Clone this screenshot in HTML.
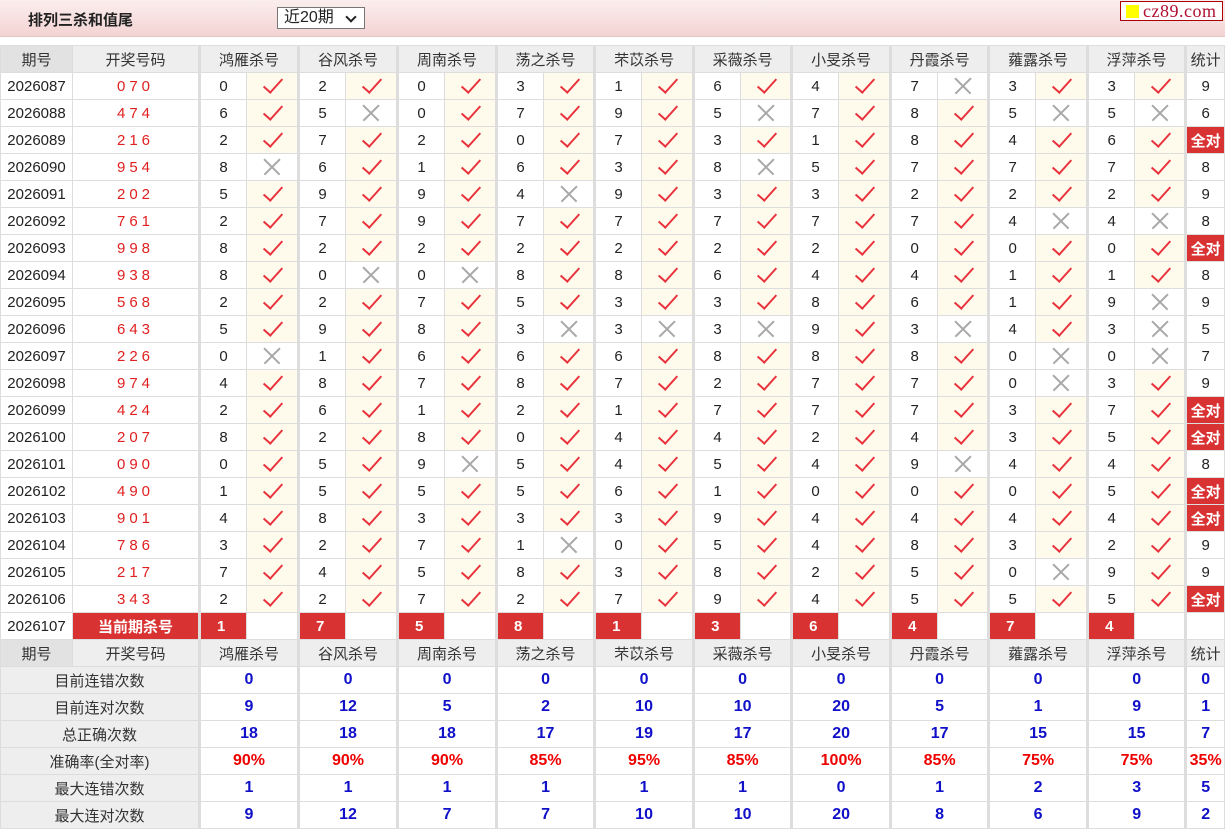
<!DOCTYPE html>
<html><head><meta charset="utf-8"><style>
*{margin:0;padding:0;box-sizing:border-box}
body{width:1225px;height:827px;overflow:hidden;background:#fff;font-family:"Liberation Sans","Noto Sans CJK SC",sans-serif;font-size:15px;color:#222}
.top{position:absolute;left:0;top:0;width:1225px;height:37px;background:linear-gradient(#fbeeee,#f4d3d3);border-bottom:1px solid #e6c4c4}
.title{position:absolute;left:28px;top:9px;font-size:15px;font-weight:bold;color:#222}
.sel{position:absolute;left:277px;top:7px;width:88px;height:22px;border:1px solid #777;background:#fff;font-size:16px;padding-left:6px;line-height:20px}
.sel:after{content:"";position:absolute;right:9px;top:5px;width:6px;height:6px;border-right:2px solid #222;border-bottom:2px solid #222;transform:rotate(45deg)}
.logo{position:absolute;left:1120px;top:1px;width:103px;height:20px;border:1px solid #a00;background:#fff;font-family:"Liberation Serif",serif;font-size:18px;color:#b01030;line-height:18px;padding-left:22px;letter-spacing:.5px}
.logo:before{content:"";position:absolute;left:5px;top:3px;width:13px;height:13px;background:#ff0}
table{position:absolute;left:0;top:45px;width:1225px;border-collapse:collapse;table-layout:fixed}
td{height:27px;border:1px solid #ddd;text-align:center;white-space:nowrap;overflow:hidden;position:relative;padding:0}
td.g{border-left:3px solid #ddd}
tr.h td{background:#eee;color:#333}
tr.h td.p{background:#e2e2e2}
td.k{color:#e02020;letter-spacing:4px}
td.y{background:#fffbec}
td.r{background:#d83232;color:#fff;font-weight:bold}
td.rn{background:#d83232;color:#fff;font-weight:bold;text-align:left;padding-left:16px}
td.l{background:#eee;color:#333}
td.v{color:#1010c8;font-weight:bold;font-size:16px}
td.vr{color:#e00;font-weight:bold;font-size:16px}
td.s{font-size:15px}
.c,.x{position:absolute;left:50%;top:50%}
.c:after{content:"";position:absolute;left:-4px;top:-12px;width:8px;height:17px;border-right:2px solid #e8323c;border-bottom:2px solid #e8323c;transform:rotate(42deg)}
.x:before,.x:after{content:"";position:absolute;left:-11px;top:-1px;width:22px;height:1.5px;background:#a8a8a8;transform:rotate(45deg)}
.x:after{transform:rotate(-45deg)}
</style></head><body>
<div class="top"><div class="title">排列三杀和值尾</div><div class="sel">近20期</div><div class="logo">cz89.com</div></div>
<table>
<colgroup><col style="width:72px"><col style="width:127px">
<col style="width:47px"><col style="width:52px"><col style="width:47px"><col style="width:52px"><col style="width:47px"><col style="width:52px"><col style="width:47px"><col style="width:51px"><col style="width:47px"><col style="width:52px"><col style="width:47px"><col style="width:51px"><col style="width:47px"><col style="width:52px"><col style="width:47px"><col style="width:51px"><col style="width:47px"><col style="width:52px"><col style="width:47px"><col style="width:51px"><col style="width:39px"></colgroup>
<tr class="h"><td class="p">期号</td><td>开奖号码</td><td class="g" colspan="2">鸿雁杀号</td><td class="g" colspan="2">谷风杀号</td><td class="g" colspan="2">周南杀号</td><td class="g" colspan="2">荡之杀号</td><td class="g" colspan="2">芣苡杀号</td><td class="g" colspan="2">采薇杀号</td><td class="g" colspan="2">小旻杀号</td><td class="g" colspan="2">丹霞杀号</td><td class="g" colspan="2">蕹露杀号</td><td class="g" colspan="2">浮萍杀号</td><td class="g">统计</td></tr>
<tr><td>2026087</td><td class="k">070</td><td class="g">0</td><td class="y"><b class="c"></b></td><td class="g">2</td><td class="y"><b class="c"></b></td><td class="g">0</td><td class="y"><b class="c"></b></td><td class="g">3</td><td class="y"><b class="c"></b></td><td class="g">1</td><td class="y"><b class="c"></b></td><td class="g">6</td><td class="y"><b class="c"></b></td><td class="g">4</td><td class="y"><b class="c"></b></td><td class="g">7</td><td><b class="x"></b></td><td class="g">3</td><td class="y"><b class="c"></b></td><td class="g">3</td><td class="y"><b class="c"></b></td><td class="g s">9</td></tr>
<tr><td>2026088</td><td class="k">474</td><td class="g">6</td><td class="y"><b class="c"></b></td><td class="g">5</td><td><b class="x"></b></td><td class="g">0</td><td class="y"><b class="c"></b></td><td class="g">7</td><td class="y"><b class="c"></b></td><td class="g">9</td><td class="y"><b class="c"></b></td><td class="g">5</td><td><b class="x"></b></td><td class="g">7</td><td class="y"><b class="c"></b></td><td class="g">8</td><td class="y"><b class="c"></b></td><td class="g">5</td><td><b class="x"></b></td><td class="g">5</td><td><b class="x"></b></td><td class="g s">6</td></tr>
<tr><td>2026089</td><td class="k">216</td><td class="g">2</td><td class="y"><b class="c"></b></td><td class="g">7</td><td class="y"><b class="c"></b></td><td class="g">2</td><td class="y"><b class="c"></b></td><td class="g">0</td><td class="y"><b class="c"></b></td><td class="g">7</td><td class="y"><b class="c"></b></td><td class="g">3</td><td class="y"><b class="c"></b></td><td class="g">1</td><td class="y"><b class="c"></b></td><td class="g">8</td><td class="y"><b class="c"></b></td><td class="g">4</td><td class="y"><b class="c"></b></td><td class="g">6</td><td class="y"><b class="c"></b></td><td class="g r">全对</td></tr>
<tr><td>2026090</td><td class="k">954</td><td class="g">8</td><td><b class="x"></b></td><td class="g">6</td><td class="y"><b class="c"></b></td><td class="g">1</td><td class="y"><b class="c"></b></td><td class="g">6</td><td class="y"><b class="c"></b></td><td class="g">3</td><td class="y"><b class="c"></b></td><td class="g">8</td><td><b class="x"></b></td><td class="g">5</td><td class="y"><b class="c"></b></td><td class="g">7</td><td class="y"><b class="c"></b></td><td class="g">7</td><td class="y"><b class="c"></b></td><td class="g">7</td><td class="y"><b class="c"></b></td><td class="g s">8</td></tr>
<tr><td>2026091</td><td class="k">202</td><td class="g">5</td><td class="y"><b class="c"></b></td><td class="g">9</td><td class="y"><b class="c"></b></td><td class="g">9</td><td class="y"><b class="c"></b></td><td class="g">4</td><td><b class="x"></b></td><td class="g">9</td><td class="y"><b class="c"></b></td><td class="g">3</td><td class="y"><b class="c"></b></td><td class="g">3</td><td class="y"><b class="c"></b></td><td class="g">2</td><td class="y"><b class="c"></b></td><td class="g">2</td><td class="y"><b class="c"></b></td><td class="g">2</td><td class="y"><b class="c"></b></td><td class="g s">9</td></tr>
<tr><td>2026092</td><td class="k">761</td><td class="g">2</td><td class="y"><b class="c"></b></td><td class="g">7</td><td class="y"><b class="c"></b></td><td class="g">9</td><td class="y"><b class="c"></b></td><td class="g">7</td><td class="y"><b class="c"></b></td><td class="g">7</td><td class="y"><b class="c"></b></td><td class="g">7</td><td class="y"><b class="c"></b></td><td class="g">7</td><td class="y"><b class="c"></b></td><td class="g">7</td><td class="y"><b class="c"></b></td><td class="g">4</td><td><b class="x"></b></td><td class="g">4</td><td><b class="x"></b></td><td class="g s">8</td></tr>
<tr><td>2026093</td><td class="k">998</td><td class="g">8</td><td class="y"><b class="c"></b></td><td class="g">2</td><td class="y"><b class="c"></b></td><td class="g">2</td><td class="y"><b class="c"></b></td><td class="g">2</td><td class="y"><b class="c"></b></td><td class="g">2</td><td class="y"><b class="c"></b></td><td class="g">2</td><td class="y"><b class="c"></b></td><td class="g">2</td><td class="y"><b class="c"></b></td><td class="g">0</td><td class="y"><b class="c"></b></td><td class="g">0</td><td class="y"><b class="c"></b></td><td class="g">0</td><td class="y"><b class="c"></b></td><td class="g r">全对</td></tr>
<tr><td>2026094</td><td class="k">938</td><td class="g">8</td><td class="y"><b class="c"></b></td><td class="g">0</td><td><b class="x"></b></td><td class="g">0</td><td><b class="x"></b></td><td class="g">8</td><td class="y"><b class="c"></b></td><td class="g">8</td><td class="y"><b class="c"></b></td><td class="g">6</td><td class="y"><b class="c"></b></td><td class="g">4</td><td class="y"><b class="c"></b></td><td class="g">4</td><td class="y"><b class="c"></b></td><td class="g">1</td><td class="y"><b class="c"></b></td><td class="g">1</td><td class="y"><b class="c"></b></td><td class="g s">8</td></tr>
<tr><td>2026095</td><td class="k">568</td><td class="g">2</td><td class="y"><b class="c"></b></td><td class="g">2</td><td class="y"><b class="c"></b></td><td class="g">7</td><td class="y"><b class="c"></b></td><td class="g">5</td><td class="y"><b class="c"></b></td><td class="g">3</td><td class="y"><b class="c"></b></td><td class="g">3</td><td class="y"><b class="c"></b></td><td class="g">8</td><td class="y"><b class="c"></b></td><td class="g">6</td><td class="y"><b class="c"></b></td><td class="g">1</td><td class="y"><b class="c"></b></td><td class="g">9</td><td><b class="x"></b></td><td class="g s">9</td></tr>
<tr><td>2026096</td><td class="k">643</td><td class="g">5</td><td class="y"><b class="c"></b></td><td class="g">9</td><td class="y"><b class="c"></b></td><td class="g">8</td><td class="y"><b class="c"></b></td><td class="g">3</td><td><b class="x"></b></td><td class="g">3</td><td><b class="x"></b></td><td class="g">3</td><td><b class="x"></b></td><td class="g">9</td><td class="y"><b class="c"></b></td><td class="g">3</td><td><b class="x"></b></td><td class="g">4</td><td class="y"><b class="c"></b></td><td class="g">3</td><td><b class="x"></b></td><td class="g s">5</td></tr>
<tr><td>2026097</td><td class="k">226</td><td class="g">0</td><td><b class="x"></b></td><td class="g">1</td><td class="y"><b class="c"></b></td><td class="g">6</td><td class="y"><b class="c"></b></td><td class="g">6</td><td class="y"><b class="c"></b></td><td class="g">6</td><td class="y"><b class="c"></b></td><td class="g">8</td><td class="y"><b class="c"></b></td><td class="g">8</td><td class="y"><b class="c"></b></td><td class="g">8</td><td class="y"><b class="c"></b></td><td class="g">0</td><td><b class="x"></b></td><td class="g">0</td><td><b class="x"></b></td><td class="g s">7</td></tr>
<tr><td>2026098</td><td class="k">974</td><td class="g">4</td><td class="y"><b class="c"></b></td><td class="g">8</td><td class="y"><b class="c"></b></td><td class="g">7</td><td class="y"><b class="c"></b></td><td class="g">8</td><td class="y"><b class="c"></b></td><td class="g">7</td><td class="y"><b class="c"></b></td><td class="g">2</td><td class="y"><b class="c"></b></td><td class="g">7</td><td class="y"><b class="c"></b></td><td class="g">7</td><td class="y"><b class="c"></b></td><td class="g">0</td><td><b class="x"></b></td><td class="g">3</td><td class="y"><b class="c"></b></td><td class="g s">9</td></tr>
<tr><td>2026099</td><td class="k">424</td><td class="g">2</td><td class="y"><b class="c"></b></td><td class="g">6</td><td class="y"><b class="c"></b></td><td class="g">1</td><td class="y"><b class="c"></b></td><td class="g">2</td><td class="y"><b class="c"></b></td><td class="g">1</td><td class="y"><b class="c"></b></td><td class="g">7</td><td class="y"><b class="c"></b></td><td class="g">7</td><td class="y"><b class="c"></b></td><td class="g">7</td><td class="y"><b class="c"></b></td><td class="g">3</td><td class="y"><b class="c"></b></td><td class="g">7</td><td class="y"><b class="c"></b></td><td class="g r">全对</td></tr>
<tr><td>2026100</td><td class="k">207</td><td class="g">8</td><td class="y"><b class="c"></b></td><td class="g">2</td><td class="y"><b class="c"></b></td><td class="g">8</td><td class="y"><b class="c"></b></td><td class="g">0</td><td class="y"><b class="c"></b></td><td class="g">4</td><td class="y"><b class="c"></b></td><td class="g">4</td><td class="y"><b class="c"></b></td><td class="g">2</td><td class="y"><b class="c"></b></td><td class="g">4</td><td class="y"><b class="c"></b></td><td class="g">3</td><td class="y"><b class="c"></b></td><td class="g">5</td><td class="y"><b class="c"></b></td><td class="g r">全对</td></tr>
<tr><td>2026101</td><td class="k">090</td><td class="g">0</td><td class="y"><b class="c"></b></td><td class="g">5</td><td class="y"><b class="c"></b></td><td class="g">9</td><td><b class="x"></b></td><td class="g">5</td><td class="y"><b class="c"></b></td><td class="g">4</td><td class="y"><b class="c"></b></td><td class="g">5</td><td class="y"><b class="c"></b></td><td class="g">4</td><td class="y"><b class="c"></b></td><td class="g">9</td><td><b class="x"></b></td><td class="g">4</td><td class="y"><b class="c"></b></td><td class="g">4</td><td class="y"><b class="c"></b></td><td class="g s">8</td></tr>
<tr><td>2026102</td><td class="k">490</td><td class="g">1</td><td class="y"><b class="c"></b></td><td class="g">5</td><td class="y"><b class="c"></b></td><td class="g">5</td><td class="y"><b class="c"></b></td><td class="g">5</td><td class="y"><b class="c"></b></td><td class="g">6</td><td class="y"><b class="c"></b></td><td class="g">1</td><td class="y"><b class="c"></b></td><td class="g">0</td><td class="y"><b class="c"></b></td><td class="g">0</td><td class="y"><b class="c"></b></td><td class="g">0</td><td class="y"><b class="c"></b></td><td class="g">5</td><td class="y"><b class="c"></b></td><td class="g r">全对</td></tr>
<tr><td>2026103</td><td class="k">901</td><td class="g">4</td><td class="y"><b class="c"></b></td><td class="g">8</td><td class="y"><b class="c"></b></td><td class="g">3</td><td class="y"><b class="c"></b></td><td class="g">3</td><td class="y"><b class="c"></b></td><td class="g">3</td><td class="y"><b class="c"></b></td><td class="g">9</td><td class="y"><b class="c"></b></td><td class="g">4</td><td class="y"><b class="c"></b></td><td class="g">4</td><td class="y"><b class="c"></b></td><td class="g">4</td><td class="y"><b class="c"></b></td><td class="g">4</td><td class="y"><b class="c"></b></td><td class="g r">全对</td></tr>
<tr><td>2026104</td><td class="k">786</td><td class="g">3</td><td class="y"><b class="c"></b></td><td class="g">2</td><td class="y"><b class="c"></b></td><td class="g">7</td><td class="y"><b class="c"></b></td><td class="g">1</td><td><b class="x"></b></td><td class="g">0</td><td class="y"><b class="c"></b></td><td class="g">5</td><td class="y"><b class="c"></b></td><td class="g">4</td><td class="y"><b class="c"></b></td><td class="g">8</td><td class="y"><b class="c"></b></td><td class="g">3</td><td class="y"><b class="c"></b></td><td class="g">2</td><td class="y"><b class="c"></b></td><td class="g s">9</td></tr>
<tr><td>2026105</td><td class="k">217</td><td class="g">7</td><td class="y"><b class="c"></b></td><td class="g">4</td><td class="y"><b class="c"></b></td><td class="g">5</td><td class="y"><b class="c"></b></td><td class="g">8</td><td class="y"><b class="c"></b></td><td class="g">3</td><td class="y"><b class="c"></b></td><td class="g">8</td><td class="y"><b class="c"></b></td><td class="g">2</td><td class="y"><b class="c"></b></td><td class="g">5</td><td class="y"><b class="c"></b></td><td class="g">0</td><td><b class="x"></b></td><td class="g">9</td><td class="y"><b class="c"></b></td><td class="g s">9</td></tr>
<tr><td>2026106</td><td class="k">343</td><td class="g">2</td><td class="y"><b class="c"></b></td><td class="g">2</td><td class="y"><b class="c"></b></td><td class="g">7</td><td class="y"><b class="c"></b></td><td class="g">2</td><td class="y"><b class="c"></b></td><td class="g">7</td><td class="y"><b class="c"></b></td><td class="g">9</td><td class="y"><b class="c"></b></td><td class="g">4</td><td class="y"><b class="c"></b></td><td class="g">5</td><td class="y"><b class="c"></b></td><td class="g">5</td><td class="y"><b class="c"></b></td><td class="g">5</td><td class="y"><b class="c"></b></td><td class="g r">全对</td></tr>
<tr><td>2026107</td><td class="r">当前期杀号</td><td class="g rn">1</td><td></td><td class="g rn">7</td><td></td><td class="g rn">5</td><td></td><td class="g rn">8</td><td></td><td class="g rn">1</td><td></td><td class="g rn">3</td><td></td><td class="g rn">6</td><td></td><td class="g rn">4</td><td></td><td class="g rn">7</td><td></td><td class="g rn">4</td><td></td><td class="g"></td></tr>
<tr class="h"><td class="p">期号</td><td>开奖号码</td><td class="g" colspan="2">鸿雁杀号</td><td class="g" colspan="2">谷风杀号</td><td class="g" colspan="2">周南杀号</td><td class="g" colspan="2">荡之杀号</td><td class="g" colspan="2">芣苡杀号</td><td class="g" colspan="2">采薇杀号</td><td class="g" colspan="2">小旻杀号</td><td class="g" colspan="2">丹霞杀号</td><td class="g" colspan="2">蕹露杀号</td><td class="g" colspan="2">浮萍杀号</td><td class="g">统计</td></tr>
<tr><td class="l" colspan="2">目前连错次数</td><td class="g v" colspan="2">0</td><td class="g v" colspan="2">0</td><td class="g v" colspan="2">0</td><td class="g v" colspan="2">0</td><td class="g v" colspan="2">0</td><td class="g v" colspan="2">0</td><td class="g v" colspan="2">0</td><td class="g v" colspan="2">0</td><td class="g v" colspan="2">0</td><td class="g v" colspan="2">0</td><td class="g v">0</td></tr>
<tr><td class="l" colspan="2">目前连对次数</td><td class="g v" colspan="2">9</td><td class="g v" colspan="2">12</td><td class="g v" colspan="2">5</td><td class="g v" colspan="2">2</td><td class="g v" colspan="2">10</td><td class="g v" colspan="2">10</td><td class="g v" colspan="2">20</td><td class="g v" colspan="2">5</td><td class="g v" colspan="2">1</td><td class="g v" colspan="2">9</td><td class="g v">1</td></tr>
<tr><td class="l" colspan="2">总正确次数</td><td class="g v" colspan="2">18</td><td class="g v" colspan="2">18</td><td class="g v" colspan="2">18</td><td class="g v" colspan="2">17</td><td class="g v" colspan="2">19</td><td class="g v" colspan="2">17</td><td class="g v" colspan="2">20</td><td class="g v" colspan="2">17</td><td class="g v" colspan="2">15</td><td class="g v" colspan="2">15</td><td class="g v">7</td></tr>
<tr><td class="l" colspan="2">准确率(全对率)</td><td class="g vr" colspan="2">90%</td><td class="g vr" colspan="2">90%</td><td class="g vr" colspan="2">90%</td><td class="g vr" colspan="2">85%</td><td class="g vr" colspan="2">95%</td><td class="g vr" colspan="2">85%</td><td class="g vr" colspan="2">100%</td><td class="g vr" colspan="2">85%</td><td class="g vr" colspan="2">75%</td><td class="g vr" colspan="2">75%</td><td class="g vr">35%</td></tr>
<tr><td class="l" colspan="2">最大连错次数</td><td class="g v" colspan="2">1</td><td class="g v" colspan="2">1</td><td class="g v" colspan="2">1</td><td class="g v" colspan="2">1</td><td class="g v" colspan="2">1</td><td class="g v" colspan="2">1</td><td class="g v" colspan="2">0</td><td class="g v" colspan="2">1</td><td class="g v" colspan="2">2</td><td class="g v" colspan="2">3</td><td class="g v">5</td></tr>
<tr><td class="l" colspan="2">最大连对次数</td><td class="g v" colspan="2">9</td><td class="g v" colspan="2">12</td><td class="g v" colspan="2">7</td><td class="g v" colspan="2">7</td><td class="g v" colspan="2">10</td><td class="g v" colspan="2">10</td><td class="g v" colspan="2">20</td><td class="g v" colspan="2">8</td><td class="g v" colspan="2">6</td><td class="g v" colspan="2">9</td><td class="g v">2</td></tr>
</table>
</body></html>
